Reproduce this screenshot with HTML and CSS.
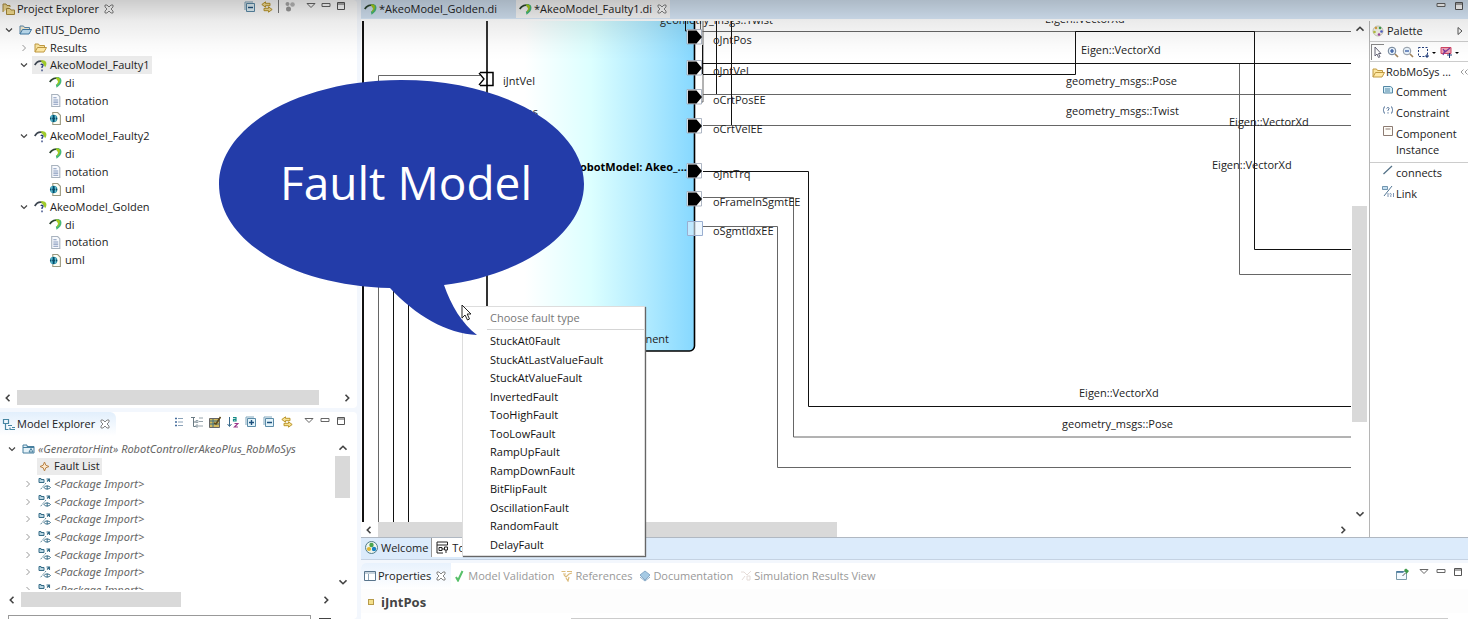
FILE: index.html
```html
<!DOCTYPE html>
<html lang="en">
<head>
<meta charset="utf-8">
<title>AkeoModel_Faulty1.di</title>
<link rel="stylesheet" href="styles.css">
</head>
<body>
<svg class="defs" aria-hidden="true">
  <symbol id="close" viewBox="0 0 10 10"><path d="M1 1h2l2 2 2-2h2v2L7 5l2 2v2H7L5 7 3 9H1V7l2-2-2-2z" fill="#fff" stroke="#777" stroke-width=".9"/></symbol>
  <symbol id="tri" viewBox="0 0 10 10"><path d="M1 2.500h8L5 6.500z" fill="#fff" stroke="#666"/></symbol>
  <symbol id="min" viewBox="0 0 10 10"><path d="M1 2.500h8v3H1z" fill="#fff" stroke="#666"/></symbol>
  <symbol id="max" viewBox="0 0 10 10"><path d="M1.500 1.500h7v7h-7zM1 3h8" fill="#fff" stroke="#555"/></symbol>
  <symbol id="collapse" viewBox="0 0 12 12"><path d="M1 9V1h8" fill="none" stroke="#7fa6bd"/><path d="M2.500 2.500h8v8h-8z" fill="#e3f4fb" stroke="#5b8ba8"/><path d="M4 6.500h5" stroke="#1d4f7c" stroke-width="1.400"/></symbol>
  <symbol id="expand" viewBox="0 0 12 12"><path d="M1 9V1h8" fill="none" stroke="#7fa6bd"/><path d="M2.500 2.500h8v8h-8z" fill="#e3f4fb" stroke="#5b8ba8"/><path d="M4 6.500h5M6.500 4v5" stroke="#1d4f7c" stroke-width="1.400"/></symbol>
  <symbol id="link" viewBox="0 0 12 12"><path d="M4.500.800.800 3.500l3.700 2.700V4.700H9V2.300H4.500zM7.500 5.800l3.700 2.700-3.700 2.700V9.700H3V7.300h4.500z" fill="#f8e192" stroke="#b58f1f" stroke-width=".9"/></symbol>
  <symbol id="papyrus" viewBox="0 0 12 12"><path d="M.700 5.500C2.500 2.500 6 1.300 9 2.300" fill="none" stroke="#2c4430" stroke-width="1.700"/><path d="M6 1.600C9 .500 11.500 1.500 11.500 4.300c0 2.500-1.500 4.400-4.500 6.500L6.300 8C8.500 7 9 5 7.500 3.500z" fill="#45b97a"/><path d="M6 1.600C8 1 9.500 1.300 10 3c.300 1.500-.500 3.500-2 5L7 8C8.500 6.500 8.800 4.500 7.500 3.500z" fill="#a9cc18"/></symbol>
  <symbol id="papyrusq" viewBox="0 0 12 12"><path d="M.700 5.500C2.500 2.500 5 1.300 8 2.300" fill="none" stroke="#3c4550" stroke-width="1.600"/><path d="M6 1.400C9 .500 11.500 1.500 11.500 4.300c0 1.200-.400 2.200-1.200 3.200L8.500 4.500z" fill="#9fca2c"/><path d="M6.300 5.500c.700-1.100 2.300-.800 2 .600l-.900 1.200v1M7.400 9.800v1.400" fill="none" stroke="#263a7a" stroke-width="1.200"/></symbol>
  <symbol id="note" viewBox="0 0 12 12"><path d="M2.500.500h5.500l2 2v9H2.500z" fill="#f8fafe" stroke="#a9b3be"/><path d="M4 3.500h3M4 5.500h4.500M4 7.500h4.500M4 9.500h4.500" stroke="#8498bb"/></symbol>
  <symbol id="uml" viewBox="0 0 12 12"><path d="M3.500.500H8l2.500 2.500v8.500h-7z" fill="#fffef4" stroke="#9a987f"/><circle cx="4.300" cy="6" r="3.400" fill="#2a93ad"/><path d="M1 6h6.600M4.300 2.700v6.600" stroke="#064a67" stroke-width="1.200"/><path d="M2.500 3.500v5M6 3.500v5" stroke="#8fd0dd" stroke-width=".6"/></symbol>
  <symbol id="folder" viewBox="0 0 13 12"><path d="M1 10.500v-8h3.500l1 1.500h5v2" fill="#fbe6a2" stroke="#c09a42"/><path d="M1 10.500 3.500 6h9L10 10.500z" fill="#ffe9a6" stroke="#c09a42"/></symbol>
  <symbol id="project" viewBox="0 0 13 12"><path d="M1 10.500v-8h3.500l1 1.500h5v2" fill="#f2ead0" stroke="#5b87a8"/><path d="M1 10.500 3.500 6h9L10 10.500z" fill="#bedff3" stroke="#3e78a5"/></symbol>
  <symbol id="import" viewBox="0 0 13 13"><path d="M1 .500h2v1h3v3H1z" fill="#b9d6e2" stroke="#376d88"/><path d="M8.500 1h3v3M11.500 1 9 3.500" fill="none" stroke="#376d88" stroke-width="1.100"/><path d="M8 5 2 12" stroke="#60899c" stroke-dasharray="2 1"/><path d="M6 9.500c1-2 5-2 6.500 0-1.500 2-5.500 2-6.500 0zM9.200 7.500v4" fill="none" stroke="#376d88"/></symbol>
  <symbol id="closed" viewBox="0 0 8 8"><path d="m2.500 1 3 3-3 3" fill="none" stroke="#999"/></symbol>
  <symbol id="open" viewBox="0 0 8 8"><path d="m1 2.500 3 3 3-3" fill="none" stroke="#444" stroke-width="1.200"/></symbol>
  <symbol id="left" viewBox="0 0 8 8"><path d="m5.500.800-3.200 3.200 3.200 3.200" fill="none" stroke="#444" stroke-width="1.600"/></symbol>
  <symbol id="right" viewBox="0 0 8 8"><path d="m2.500.800 3.200 3.200-3.200 3.200" fill="none" stroke="#444" stroke-width="1.600"/></symbol>
  <symbol id="up" viewBox="0 0 8 8"><path d="m.500 5.700 3.500-3.400 3.500 3.400" fill="none" stroke="#444" stroke-width="1.600"/></symbol>
  <symbol id="down" viewBox="0 0 8 8"><path d="m.500 2.300 3.500 3.400 3.500-3.400" fill="none" stroke="#444" stroke-width="1.600"/></symbol>
</svg>

<div class="workbench">
  <aside class="side">
    <section class="view" aria-label="Project Explorer">
      <header class="head head-top">
        <h2 class="title"><svg class="i13" viewBox="0 0 13 13"><path d="M1 9V1h3l1 1.500h3V4" fill="#f3dc92" stroke="#a98b3a"/><path d="M4.500 11.500v-6H8L9 7h3.500v4.500z" fill="#f6df90" stroke="#a98b3a"/></svg>Project Explorer<svg class="i10"><use href="#close"/></svg></h2>
        <div class="tools">
          <button aria-label="Collapse all"><svg class="i12"><use href="#collapse"/></svg></button>
          <button aria-label="Link with editor"><svg class="i12"><use href="#link"/></svg></button>
          <i class="bar"></i>
          <button aria-label="Focus"><svg class="i12" viewBox="0 0 12 12"><circle cx="3.500" cy="3" r="2" fill="#aaa"/><circle cx="8.500" cy="3.500" r="2.300" fill="#bbb"/><circle cx="4.500" cy="8" r="2.500" fill="#999"/></svg></button>
          <button aria-label="View menu" class="win"><svg class="i10"><use href="#tri"/></svg></button>
          <button aria-label="Minimize" class="win"><svg class="i10"><use href="#min"/></svg></button>
          <button aria-label="Maximize" class="win"><svg class="i10"><use href="#max"/></svg></button>
        </div>
      </header>
      <ul class="tree files">
        <li class="l0"><svg class="i8"><use href="#open"/></svg><svg class="i13"><use href="#project"/></svg><span>eITUS_Demo</span></li>
        <li class="l1"><svg class="i8"><use href="#closed"/></svg><svg class="i13"><use href="#folder"/></svg><span>Results</span></li>
        <li class="l1"><svg class="i8"><use href="#open"/></svg><b class="sel"><svg class="i13"><use href="#papyrusq"/></svg><span>AkeoModel_Faulty1</span></b></li>
        <li class="l2"><svg class="i13"><use href="#papyrus"/></svg><span>di</span></li>
        <li class="l2"><svg class="i13"><use href="#note"/></svg><span>notation</span></li>
        <li class="l2"><svg class="i13"><use href="#uml"/></svg><span>uml</span></li>
        <li class="l1"><svg class="i8"><use href="#open"/></svg><svg class="i13"><use href="#papyrusq"/></svg><span>AkeoModel_Faulty2</span></li>
        <li class="l2"><svg class="i13"><use href="#papyrus"/></svg><span>di</span></li>
        <li class="l2"><svg class="i13"><use href="#note"/></svg><span>notation</span></li>
        <li class="l2"><svg class="i13"><use href="#uml"/></svg><span>uml</span></li>
        <li class="l1"><svg class="i8"><use href="#open"/></svg><svg class="i13"><use href="#papyrusq"/></svg><span>AkeoModel_Golden</span></li>
        <li class="l2"><svg class="i13"><use href="#papyrus"/></svg><span>di</span></li>
        <li class="l2"><svg class="i13"><use href="#note"/></svg><span>notation</span></li>
        <li class="l2"><svg class="i13"><use href="#uml"/></svg><span>uml</span></li>
      </ul>
      <div class="hscroll project-scroll"><svg class="i8"><use href="#left"/></svg><div class="track"><div class="thumb" style="width:94%"></div></div><svg class="i8"><use href="#right"/></svg></div>
    </section>

    <section class="view" aria-label="Model Explorer">
      <header class="head">
        <h2 class="title tab-on"><svg class="i13" viewBox="0 0 13 13"><path d="M1.500 1.500h5v4h-5zM3.500 5.500v6h3M6 7.500h4M8 9.500v2h5M10 9.500h3" fill="none" stroke="#4686a3" stroke-width="1.200"/></svg>Model Explorer<svg class="i10"><use href="#close"/></svg></h2>
        <div class="tools">
          <button aria-label="List"><svg class="i12" viewBox="0 0 12 12"><path d="M2 2.500h2M2 6h2M2 9.500h2" stroke="#456c9c" stroke-width="1.500"/><path d="M5 2.500h5M5 6h5M5 9.500h5" stroke="#8ba2b8"/></svg></button>
          <button aria-label="Tree"><svg class="i12" viewBox="0 0 12 12"><path d="M0 1.500h4M2.500 2v8.500h3M2.500 6h3" fill="none" stroke="#6a7a83"/><path d="M5 4.500h2v2H5zM5 9h2v2H5zM8 2h4M8 5.500h4M8 10h4" fill="none" stroke="#95a2aa"/></svg></button>
          <button aria-label="Customize"><svg class="i12" viewBox="0 0 12 12"><path d="M.500 2.500h10v9H.500z" fill="#d4b95c" stroke="#666"/><path d="M1 5h9M1 8h9M4 3v8" stroke="#3d7184"/><path d="m5 7 2 1 4.500-7" fill="none" stroke="#5e4a1c" stroke-width="1.600"/></svg></button>
          <button aria-label="Sort"><svg class="i12" viewBox="0 0 12 12"><path d="M2.500 1v9M.500 8l2 2.500 2-2.500" fill="none" stroke="#38688b"/><path d="M6 1.500h3V5H6.500V3.300H9" fill="none" stroke="#168b86" stroke-width="1.200"/><path d="M7.500 7.500h3.500L7.500 11H11" fill="none" stroke="#9d3a8d" stroke-width="1.200"/></svg></button>
          <button aria-label="Expand all"><svg class="i12"><use href="#expand"/></svg></button>
          <button aria-label="Collapse all"><svg class="i12"><use href="#collapse"/></svg></button>
          <button aria-label="Link with editor"><svg class="i12"><use href="#link"/></svg></button>
          <button aria-label="View menu" class="win"><svg class="i10"><use href="#tri"/></svg></button>
          <button aria-label="Minimize" class="win"><svg class="i10"><use href="#min"/></svg></button>
          <button aria-label="Maximize" class="win"><svg class="i10"><use href="#max"/></svg></button>
        </div>
      </header>
      <div class="model">
        <div class="clip">
          <ul class="tree imports">
            <li class="m0"><svg class="i8"><use href="#open"/></svg><svg class="i13" viewBox="0 0 13 12"><path d="M1 10.500v-8h4v1.500h7v6.500z" fill="#e5f2f8" stroke="#477f9e"/><path d="M1 5h11M7 9.500 9 6l2 3.500z" fill="none" stroke="#477f9e"/></svg><em>«GeneratorHint» RobotControllerAkeoPlus_RobMoSys</em></li>
            <li class="m1"><b class="sel"><svg class="i13" viewBox="0 0 13 13"><path d="m6.500 2 1.300 3.200L11 6.500 7.800 7.800 6.500 11 5.200 7.800 2 6.500l3.200-1.300z" fill="#fbe8cf" stroke="#b98345"/></svg><span>Fault List</span></b></li>
            <li class="m2"><svg class="i8"><use href="#closed"/></svg><svg class="i13"><use href="#import"/></svg><em>&lt;Package Import&gt;</em></li>
            <li class="m2"><svg class="i8"><use href="#closed"/></svg><svg class="i13"><use href="#import"/></svg><em>&lt;Package Import&gt;</em></li>
            <li class="m2"><svg class="i8"><use href="#closed"/></svg><svg class="i13"><use href="#import"/></svg><em>&lt;Package Import&gt;</em></li>
            <li class="m2"><svg class="i8"><use href="#closed"/></svg><svg class="i13"><use href="#import"/></svg><em>&lt;Package Import&gt;</em></li>
            <li class="m2"><svg class="i8"><use href="#closed"/></svg><svg class="i13"><use href="#import"/></svg><em>&lt;Package Import&gt;</em></li>
            <li class="m2"><svg class="i8"><use href="#closed"/></svg><svg class="i13"><use href="#import"/></svg><em>&lt;Package Import&gt;</em></li>
            <li class="m2"><svg class="i8"><use href="#closed"/></svg><svg class="i13"><use href="#import"/></svg><em>&lt;Package Import&gt;</em></li>
          </ul>
        </div>
        <div class="vscroll"><svg class="i8"><use href="#up"/></svg><div class="track"><div class="thumb" style="height:36%"></div></div><svg class="i8"><use href="#down"/></svg></div>
      </div>
      <div class="hscroll model-h"><svg class="i8"><use href="#left"/></svg><div class="track"><div class="thumb" style="width:54%"></div></div><svg class="i8"><use href="#right"/></svg></div>
      <div class="search"><input type="text" aria-label="Search model"><i class="dark"></i></div>
    </section>
  </aside>

  <main class="main">
    <section class="editor" aria-label="Editor">
      <header class="tabs">
        <button class="tab"><svg class="i13"><use href="#papyrus"/></svg>*AkeoModel_Golden.di</button>
        <button class="tab current"><svg class="i13"><use href="#papyrus"/></svg>*AkeoModel_Faulty1.di<svg class="i10"><use href="#close"/></svg></button>
        <div class="tools">
          <button aria-label="Minimize" class="win"><svg class="i10"><use href="#min"/></svg></button>
          <button aria-label="Maximize" class="win"><svg class="i10"><use href="#max"/></svg></button>
        </div>
      </header>
      <div class="work">
        <div class="sheet">
          <div class="sheet-row">
            <svg class="diagram">
              <defs>
                <linearGradient id="body" x1="0" x2="1" y1="0" y2="0"><stop offset=".18" stop-color="#fff"/><stop offset=".5" stop-color="#dcffff"/><stop offset=".76" stop-color="#b2ebff"/><stop offset="1" stop-color="#86d8ff"/></linearGradient>
                <g id="port"><path d="M-1-7.500h14.500v14.500H-1z" fill="#fff" stroke="#9aa5b5" stroke-width=".8"/><path d="M0-6.500h8.500L14 0 8.500 6.500H0z"/></g>
              </defs>
              <g transform="translate(-362 -21)">
                <rect x="487" y="-20" width="207.500" height="371" rx="5" fill="url(#body)" stroke="#000" stroke-width="1.600"/>
                <path class="w2" d="M363 0V522"/>
                <path class="w1 g" d="M378.500 522V75.500H480M702.500 31.500H3000M3000 94.500H703M3000 125.500H703M3000 274.500H1239.500V63.500M703 197.500h90.500v239.500H3000M703 226.500h74.500v241H3000M703 20v82h-9M700.500 20v15"/>
                <path class="w1" d="M393.500 280V522M408.500 280V522M685.500 20v11h8M703 63.500H3000M703 74.500H1075.500V31.500H1254.500V249.500H3000M703 171.500h105.500v235H3000M716.500 20v74M731.500 20v105M702.500 45v29"/>
                <path d="M480 72.500h13v13h-13" fill="none" stroke="#000" stroke-width="1.500"/>
                <path d="M479 73l5 6-5 6" fill="none" stroke="#000" stroke-width="1.300"/>
                <use href="#port" x="688" y="37"/><use href="#port" x="688" y="68"/><use href="#port" x="688" y="97"/><use href="#port" x="688" y="126"/><use href="#port" x="688" y="171"/><use href="#port" x="688" y="199"/>
                <path d="M687.500 221.500h15v14h-15z" fill="#e4f4ff" fill-opacity=".6" stroke="#9aaed0"/>
                <g class="label">
                  <text x="503" y="85">iJntVel</text><text x="503" y="116">iJntPos</text>
                  <text x="660" y="24">geometry_msgs::Twist</text><text x="1045" y="23">Eigen::VectorXd</text>
                  <text x="713" y="44">oJntPos</text><text x="713" y="75">oJntVel</text><text x="713" y="104">oCrtPosEE</text><text x="713" y="133">oCrtVelEE</text><text x="713" y="178">oJntTrq</text><text x="713" y="206">oFrameInSgmtEE</text><text x="713" y="235">oSgmtIdxEE</text>
                  <text x="1081" y="54">Eigen::VectorXd</text><text x="1066" y="85">geometry_msgs::Pose</text><text x="1066" y="115">geometry_msgs::Twist</text><text x="1229" y="126">Eigen::VectorXd</text><text x="1212" y="169">Eigen::VectorXd</text><text x="1079" y="397">Eigen::VectorXd</text><text x="1062" y="428">geometry_msgs::Pose</text>
                  <text x="669" y="343" text-anchor="end">Component</text>
                  <text x="687" y="171" text-anchor="end" class="strong">RobotModel: Akeo_...</text>
                </g>
              </g>
            </svg>
            <div class="vscroll sheet-v"><svg class="i8"><use href="#up"/></svg><div class="track"><div style="height:36%"></div><div class="thumb" style="height:46%"></div></div><svg class="i8"><use href="#down"/></svg></div>
          </div>
          <div class="hscroll edit-h"><svg class="i8"><use href="#left"/></svg><div class="track"><div class="thumb" style="width:48%"></div></div><svg class="i8"><use href="#right"/></svg></div>
        </div>
        <aside class="palette" aria-label="Palette">
          <h3 class="pal-head"><svg class="i12" viewBox="0 0 12 12"><circle cx="6" cy="6" r="5" fill="#f2f2e8" stroke="#c9c9b8"/><circle cx="4" cy="3" r="1.300" fill="#d9a441"/><circle cx="8" cy="3" r="1.300" fill="#3ea04e"/><circle cx="9.500" cy="6.500" r="1.300" fill="#5060c8"/><circle cx="7" cy="9.500" r="1.300" fill="#a144a0"/><circle cx="2.500" cy="7" r="1.300" fill="#b8c43e"/></svg><span>Palette</span><svg class="i8" viewBox="0 0 8 8"><path d="M2 .500 6 4 2 7.500z" fill="#fff" stroke="#555"/></svg></h3>
          <div class="pal-tools">
            <button class="pressed" aria-label="Select"><svg class="i12" viewBox="0 0 12 12"><path d="M3 1v9l2-2 1.500 3.500 1.500-.700L6.500 7.500H9z" fill="#fff" stroke="#667"/></svg></button>
            <button aria-label="Zoom in"><svg class="i12" viewBox="0 0 12 12"><circle cx="5" cy="5" r="3.800" fill="#e8f2fb" stroke="#6c7e95"/><path d="M3 5h4M5 3v4" stroke="#234c9c" stroke-width="1.200"/><path d="m8 8 3 3" stroke="#a08259" stroke-width="1.600"/></svg></button>
            <button aria-label="Zoom out"><svg class="i12" viewBox="0 0 12 12"><circle cx="5" cy="5" r="3.800" fill="#e8f2fb" stroke="#9099a5"/><path d="M3 5h4" stroke="#234c9c" stroke-width="1.200"/><path d="m8 8 3 3" stroke="#a08259" stroke-width="1.600"/></svg></button>
            <button class="wide" aria-label="Marquee"><svg viewBox="0 0 20 12"><path d="M1.500 1.500h9v9h-9z" fill="none" stroke="#1f3a78" stroke-dasharray="2 1.500"/><path d="M8 10h4M10 8v4" stroke="#1f3a78"/><path d="M15 6h4l-2 2z"/></svg></button>
            <button class="wide" aria-label="Tool"><svg viewBox="0 0 20 12"><path d="M1 1.500h10v6H1z" fill="#f0a3b4" stroke="#cf4566"/><path d="m3 3 2 3 5-4M3 9l2-5" fill="none" stroke="#7a3a9b" stroke-width="1.200"/><path d="M7 9h5M9.500 7v5" stroke="#1f3a78"/><path d="M15 6h4l-2 2z"/></svg></button>
          </div>
          <div class="drawer"><svg class="i13"><use href="#folder"/></svg><span>RobMoSys ...</span><svg class="i8" viewBox="0 0 8 8"><path d="M3.500 1.500 1 4l2.500 2.500M7.500 1.500 5 4l2.500 2.500" fill="none" stroke="#999"/></svg></div>
          <button class="item"><svg class="i12" viewBox="0 0 12 12"><path d="M1.500 2.500h7l2 1.500v5h-9z" fill="#d5eef8" stroke="#5487a4"/><path d="M3 5h5M3 7h5" stroke="#5487a4"/></svg><span>Comment</span></button>
          <button class="item"><svg class="i12" viewBox="0 0 12 12"><path d="M3 1.500c-1.500 0-1 3.500-2 3.500 1 0 .500 3.500 2 3.500M9 1.500c1.500 0 1 3.500 2 3.500-1 0-.500 3.500-2 3.500M4.700 3.500c.300-1.500 2.800-1.200 2.300.300L6 5.300V6M6 7.300v1.200" fill="none" stroke="#4c6d95"/></svg><span>Constraint</span></button>
          <button class="item"><svg class="i12" viewBox="0 0 12 12"><path d="M1.500.500h9v9h-9z" fill="#fffdf8" stroke="#8c7b73"/><path d="M3.500 3h5" stroke="#8c7b73"/></svg><span>Component Instance</span></button>
          <hr class="rule">
          <button class="item"><svg class="i12" viewBox="0 0 12 12"><path d="m1.500 9 8.500-8" stroke="#506f85" stroke-width="1.200"/></svg><span>connects</span></button>
          <button class="item"><svg class="i12" viewBox="0 0 12 12"><path d="M.500.500h5v3h-5z" fill="#c4dff2" stroke="#557f9c" stroke-width=".8"/><path d="m2 10 8-10" stroke="#507593"/><path d="M6 7v4M11.500 7v4M7.500 8c1-1.300 2.500 0 1.300 1.300V11" fill="none" stroke="#5a79a0" stroke-width=".8"/></svg><span>Link</span></button>
        </aside>
      </div>
      <footer class="pages">
        <button class="page"><svg class="i13" viewBox="0 0 13 13"><circle cx="6.500" cy="6.500" r="6" fill="#eef5ee" stroke="#517d8a"/><circle cx="6.500" cy="4" r="2.200" fill="#4aa44e"/><circle cx="4" cy="8" r="2.100" fill="#e1b731"/><circle cx="9" cy="8" r="2.200" fill="#1781c4"/></svg>Welcome</button>
        <button class="page on"><svg class="i13" viewBox="0 0 13 13"><path d="M1 1h10.500v3H1zM1 4v8h6M3 6.500h3v3H3zM6 8h2" fill="none" stroke="#222"/><path d="M8.500 6h3v3h-3zM10 9v3" fill="none" stroke="#222"/></svg>Top</button>
      </footer>
    </section>

    <section class="props" aria-label="Properties">
      <header class="prop-tabs">
        <button class="ptab on"><svg class="i12" viewBox="0 0 12 12"><path d="M.500 1.500h11v9H.500z" fill="#fff" stroke="#59758c"/><path d="M1 3h10M4.500 4v6" stroke="#8da5b8"/></svg>Properties<svg class="i10"><use href="#close"/></svg></button>
        <button class="ptab"><svg class="i12" viewBox="0 0 12 12"><path d="m2 7 2 3.500L8.500 1" fill="none" stroke="#58c069" stroke-width="2"/></svg>Model Validation</button>
        <button class="ptab"><svg class="i12" viewBox="0 0 12 12"><path d="M.500 1.500h4M2 4h3M6 1.500h5M3 5l2 2 3-3 3-1M5 8l2 3 1-4" fill="none" stroke="#dcbc7c" stroke-width="1.200"/></svg>References</button>
        <button class="ptab"><svg class="i12" viewBox="0 0 12 12"><path d="m1 5 5-4 5 4-5 5z" fill="#a6cae4" stroke="#88aac8"/><path d="m1 7 5 4 5-4" fill="none" stroke="#88aac8"/></svg>Documentation</button>
        <button class="ptab"><svg class="i12" viewBox="0 0 12 12"><path d="M1 2h3l3 3 4-4M2 10l3-4M7 6h3v4H7z" fill="none" stroke="#e5dcd8"/></svg>Simulation Results View</button>
        <div class="tools">
          <button aria-label="Pin" class="pin"><svg class="i13" viewBox="0 0 13 13"><path d="M.500 3.500h10v8H.500z" fill="#f4faff" stroke="#7b9aa8"/><path d="M.500 4h7" stroke="#396e98" stroke-width="1.500"/><path d="m6.500 8 3-3" stroke="#555"/><path d="m8 2 2-1.500L13 3l-2.500 3z" fill="#3f9a4b"/></svg></button>
          <button aria-label="View menu" class="win"><svg class="i10"><use href="#tri"/></svg></button>
          <button aria-label="Minimize" class="win"><svg class="i10"><use href="#min"/></svg></button>
          <button aria-label="Maximize" class="win"><svg class="i10"><use href="#max"/></svg></button>
        </div>
      </header>
      <h1 class="subject"><i class="dot"></i>iJntPos</h1>
      <div class="prop-body"><i></i><i class="edge"></i></div>
    </section>
  </main>

  <div class="menu" role="menu">
    <p class="menu-title">Choose fault type</p>
    <div class="menu-list">
      <button role="menuitem">StuckAt0Fault</button>
      <button role="menuitem">StuckAtLastValueFault</button>
      <button role="menuitem">StuckAtValueFault</button>
      <button role="menuitem">InvertedFault</button>
      <button role="menuitem">TooHighFault</button>
      <button role="menuitem">TooLowFault</button>
      <button role="menuitem">RampUpFault</button>
      <button role="menuitem">RampDownFault</button>
      <button role="menuitem">BitFlipFault</button>
      <button role="menuitem">OscillationFault</button>
      <button role="menuitem">RandomFault</button>
      <button role="menuitem">DelayFault</button>
    </div>
  </div>
  <div class="shade"></div>
  <svg class="bubble" viewBox="0 0 366 258">
    <path d="M1 105C1 47 82 1 183 1S366 47 366 105c0 50-62 91-140 101 7 20 18 39 33 50-30-1-62-20-87-47C76 207 1 163 1 105z" fill="#233ca9"/>
    <text class="bubble-text" x="188" y="121" text-anchor="middle">Fault Model</text>
  </svg>
  <svg class="cursor" viewBox="0 0 11 18"><path d="M1 1v13l3-3 2.500 5 2-1L6.200 10H10z" fill="#fff" stroke="#222"/></svg>
</div>
</body>
</html>
```

FILE: styles.css
```css
* { box-sizing: border-box; }
body {
  margin: 0;
  font: 11px/16px "Open Sans", "Noto Sans", sans-serif;
  color: #222;
  background: #f3f7fd;
}
button {
  display: flex;
  align-items: center;
  margin: 0;
  padding: 0;
  border: 0;
  background: none;
  font: inherit;
  color: inherit;
  text-align: left;
  white-space: nowrap;
}
svg { flex: none; display: block; }
h1, h2, h3, p, ul { margin: 0; padding: 0; font: inherit; }
.defs { position: absolute; width: 0; height: 0; }
.i8 { width: 8px; height: 8px; }
.i10 { width: 10px; height: 10px; }
.i12 { width: 12px; height: 12px; }
.i13 { width: 13px; height: 13px; }

.workbench {
  position: relative;
  display: grid;
  grid-template-columns: 357px minmax(0, 1fr);
  column-gap: 4px;
  height: 100vh;
  overflow: hidden;
}
.side {
  display: grid;
  grid-template-rows: minmax(0, 408fr) minmax(0, 207fr);
  row-gap: 4px;
  min-height: 0;
}
.view {
  display: flex;
  flex-direction: column;
  min-height: 0;
  background: #fff;
  border-radius: 0 4px 4px 0;
  overflow: hidden;
}
.head { display: flex; height: 24px; flex: none; }
.head-top { height: 21px; }
.title { display: flex; align-items: center; gap: 2px; padding: 0 6px 0 2px; font-size: 11px; }
.head-top .title { height: 18px; }
.title .i10 { margin-left: 3px; }
.tab-on { background: linear-gradient(#e2effc, #fff); border-radius: 0 6px 0 0; }
.tools { display: flex; align-items: center; gap: 6px; margin-left: auto; padding-right: 11px; height: 20px; }
.head-top .tools { height: 13px; gap: 5px; }
.bar { width: 1px; height: 13px; background: #777; }
.win { height: 12px; align-items: flex-start; }
.view .tools .win:nth-last-child(3) { margin-left: 5px; }

.tree { list-style: none; display: grid; grid-auto-rows: 1fr; }
.tree li { display: flex; align-items: center; gap: 3px; white-space: nowrap; min-height: 0; }
.files { height: 248px; }
.tree .i8 { margin-right: 3px; }
.l0 { padding-left: 5px; }
.l1 { padding-left: 20px; }
.l2 { padding-left: 49px; }
.m0 { padding-left: 8px; }
.m1 { padding-left: 37px; }
.m2 { padding-left: 24px; }
.sel { display: flex; align-items: center; gap: 3px; height: 100%; margin-left: -2px; padding: 0 2px; background: #ebebeb; font-weight: 400; }
.m1 .sel { margin-left: 0; padding-left: 1px; }
.tree em { color: #666; font-family: "Noto Sans", "Open Sans", sans-serif; }

.hscroll { display: flex; align-items: center; height: 15px; flex: none; }
.track { flex: 1; align-self: stretch; min-width: 0; min-height: 0; }
.thumb { background: #d9d9d9; height: 100%; }
.project-scroll { margin: auto 6px 3px 4px; gap: 5px; }
.model-h { margin: 2px 27px 0 8px; gap: 5px; }
.vscroll { display: flex; flex-direction: column; align-items: center; width: 15px; padding: 4px 0; gap: 4px; flex: none; }
.vscroll .thumb { width: 100%; }
.sheet-v { margin-right: 2px; }
.model { display: flex; height: 154px; flex: none; padding: 4px 7px 0 0; }
.clip { flex: 1; min-width: 0; overflow: hidden; }
.imports { height: 159px; }
.search { display: flex; align-items: flex-start; gap: 8px; margin-top: 8px; padding-left: 8px; }
.search input { width: 303px; height: 22px; border: 1px solid #999; background: #fff; font: inherit; }
.dark { width: 12px; height: 6px; margin-top: 3px; background: #444; }

.main { display: grid; grid-template-rows: minmax(0, 1fr) 56px; row-gap: 3px; min-width: 0; min-height: 0; }
.editor { display: flex; flex-direction: column; min-width: 0; min-height: 0; border-bottom: 1px solid #c5d2e2; background: #fff; }
.tabs { display: flex; height: 19px; flex: none; background: #d8e8f8; }
.tab { gap: 2px; padding: 0 12px 0 3px; height: 18px; }
.tab:first-child { width: 155px; background: #d1e1f1; }
.current { background: #f7f7f7; padding-right: 3px; }
.current .i10 { margin-left: 3px; }
.tabs .tools { padding-right: 4px; gap: 8px; height: 13px; }
.work { display: flex; flex: 1; min-height: 0; padding-top: 2px; }
.sheet { display: flex; flex-direction: column; flex: 1; min-width: 0; }
.sheet-row { display: flex; flex: 1; min-height: 0; }
.diagram { flex: 1; min-width: 0; height: 100%; margin-left: 1px; margin-right: 1px; overflow: hidden; }
.w1, .w2 { fill: none; stroke: #111; stroke-width: 1px; }
.w2 { stroke-width: 2px; }
.g { stroke: #666; }
.label { font-size: 11px; fill: #222; }
.strong { font-weight: 700; fill: #000; }
.edit-h { padding: 0 22px 0 4px; gap: 5px; }
.palette { width: 99px; flex: none; border-left: 1px solid #b5b5b5; background: #fff; overflow: hidden; }
.pal-head { display: flex; align-items: center; gap: 3px; height: 21px; padding: 0 4px 0 2px; border-bottom: 1px solid #ccc; }
.pal-head .i8, .drawer .i8 { margin-left: auto; }
.pal-tools { display: flex; align-items: center; gap: 3px; height: 20px; padding-left: 1px; border-bottom: 1px solid #ccc; }
.pressed { border-left: 1px solid #888; border-top: 1px solid #888; height: 16px; }
.wide svg { width: 20px; height: 12px; }
.drawer { display: flex; align-items: center; gap: 1px; height: 20px; padding-left: 2px; white-space: nowrap; }
.item { width: 100%; align-items: flex-start; gap: 2px; padding: 2px 8px 3px 12px; white-space: normal; }
.rule { margin: 1px 0 0; border: 0; border-top: 1px solid #ccc; }
.pages { display: flex; height: 22px; flex: none; border-top: 1px solid #b0b8c2; background: #dcebfb; }
.page { gap: 3px; height: 19px; padding: 0 3px 0 4px; border-right: 1px solid #999; }
.page.on { background: #fff; }

.props { background: #fff; border-radius: 5px 0 0 0; overflow: hidden; }
.prop-tabs { display: flex; height: 26px; }
.ptab { gap: 2px; padding: 0 4px 0 3px; color: #999; }
.ptab.on { color: #222; background: linear-gradient(#e8f2fd, #fff); padding-right: 5px; }
.ptab.on .i10 { margin-left: 3px; }
.prop-tabs .tools { padding-right: 5px; gap: 7px; height: 22px; }
.pin { margin-right: 3px; }
.prop-tabs .win { height: 15px; }
.subject { display: flex; align-items: center; gap: 7px; height: 24px; padding: 2px 0 0 7px; font-size: 13px; font-weight: 700; color: #444; background: #fdfdfd; }
.dot { width: 6px; height: 6px; background: #f4e08c; border: 1px solid #b79b4a; }
.prop-body { display: flex; height: 6px; padding-top: 5px; }
.prop-body i { width: 210px; }
.prop-body .edge { flex: 1; margin-right: 20px; background: #ccc; }

.menu {
  position: absolute;
  left: 462px;
  top: 306px;
  width: 183px;
  padding-bottom: 1px;
  background: #fff;
  border: 1px solid #ddd;
  box-shadow: 1px 1px 1px #666;
}
.menu-title { margin-left: 24px; padding: 3px 0 3px 3px; border-bottom: 1px solid #d5d5d5; color: #777; }
.menu-list { display: grid; grid-auto-rows: 1fr; height: 222px; padding-left: 27px; margin-top: 2px; }
.menu-list button { color: #111; min-height: 0; }
.shade {
  position: absolute;
  inset: 0 0 auto;
  height: 60px;
  background: linear-gradient(rgba(0,0,0,.2), rgba(0,0,0,.08) 35%, rgba(0,0,0,.02) 75%, transparent);
  pointer-events: none;
}
.bubble { position: absolute; left: 218px; top: 79px; width: 366px; height: 258px; }
.bubble-text { font-size: 46px; fill: #fff; }
.cursor { position: absolute; left: 461px; top: 304px; width: 11px; height: 18px; }
```
